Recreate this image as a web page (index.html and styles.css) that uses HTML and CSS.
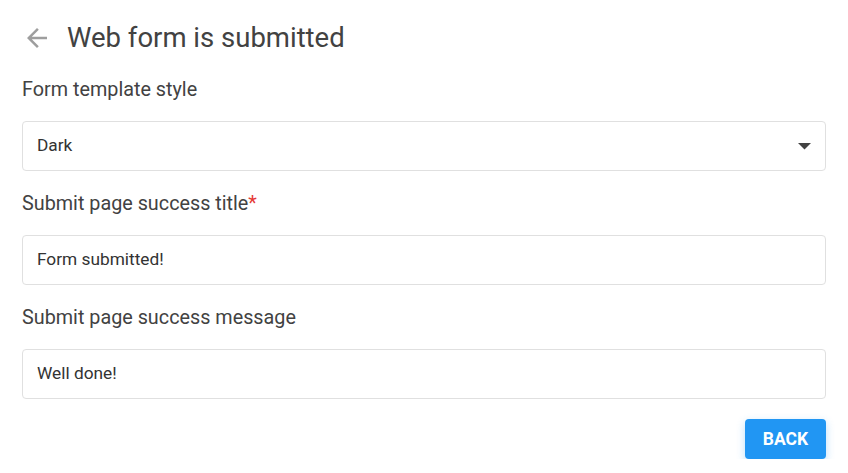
FILE: index.html
```html
<!DOCTYPE html>
<html>
<head>
<meta charset="utf-8">
<link rel="stylesheet" href="styles.css">
</head>
<body>
<div class="page">
  <header class="header">
    <svg class="back-icon" width="30" height="30" viewBox="0 0 24 24"><path d="M20 11H7.83l5.59-5.59L12 4l-8 8 8 8 1.41-1.41L7.83 13H20v-2z" fill="#9e9e9e"/></svg>
    <h1 class="title">Web form is submitted</h1>
  </header>
  <div class="field">
    <label class="label">Form template style</label>
    <div class="box select">
      <span>Dark</span>
      <svg class="caret" width="13" height="7" viewBox="0 0 13 7"><path d="M0 0h13L6.5 6.5z" fill="#424242"/></svg>
    </div>
  </div>
  <div class="field">
    <label class="label">Submit page success title<span class="req">*</span></label>
    <div class="box">Form submitted!</div>
  </div>
  <div class="field">
    <label class="label">Submit page success message</label>
    <div class="box">Well done!</div>
  </div>
  <div class="actions">
    <button class="btn">BACK</button>
  </div>
</div>
</body>
</html>
```
FILE: styles.css
```css
* { box-sizing: border-box; }
html, body { margin: 0; padding: 0; background: #fff; }
body { font-family: Roboto, "Liberation Sans", sans-serif; color: #424242; }
.page { padding: 22px 22px 0 22px; }
.header { display: flex; align-items: center; height: 32px; }
.back-icon { margin-left: 0; margin-right: 15px; }
.title { margin: 0; font-size: 27.5px; font-weight: 400; line-height: 32px; color: #424242; }
.field { display: flex; flex-direction: column; }
.label { display: block; font-size: 19.8px; line-height: 24px; margin-top: 24px; margin-bottom: 19px; color: #424242; }
.field + .field .label { margin-top: 21px; }
.req { color: #e53935; }
.box { height: 50px; border: 1px solid #e0e0e0; border-radius: 4px; padding: 0 14px 2px 14px; display: flex; align-items: center; font-size: 17.3px; color: #333; }
.select { justify-content: space-between; padding-right: 14px; }
.caret { margin-top: 3px; }
.actions { display: flex; justify-content: flex-end; margin-top: 20px; }
.btn { height: 40px; width: 81px; border: none; border-radius: 4px; background: #2196f3; color: #fff; font-family: Roboto, "Liberation Sans", sans-serif; font-weight: 700; font-size: 17.5px; letter-spacing: 0; box-shadow: 0 3px 8px rgba(33,150,243,0.3); padding: 0; }
```
